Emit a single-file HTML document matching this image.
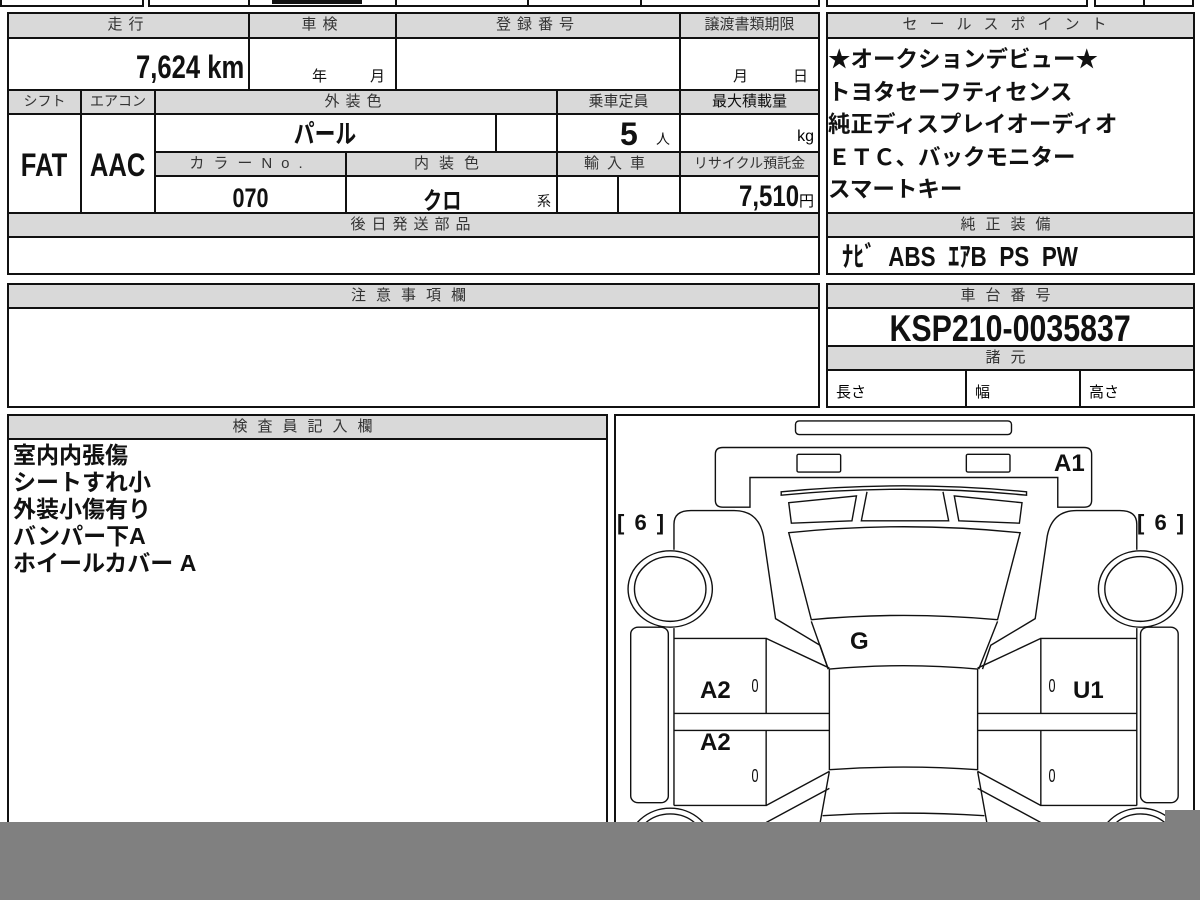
<!DOCTYPE html>
<html><head><meta charset="utf-8"><style>
body{margin:0;width:1200px;height:900px;overflow:hidden;background:#fff;position:relative;font-family:"Liberation Sans","Noto Sans CJK JP",sans-serif;}
.c{position:absolute;border:2px solid #111;box-sizing:border-box;background:#fff;}
.h{background:#d9d9d9;color:#333;font-size:15px;letter-spacing:6px;text-align:center;line-height:21px;}
.n{font-weight:bold;color:#111;}
.q{display:inline-block;transform:scaleX(0.8);}
.qr{transform-origin:right center;}
.ql{transform-origin:left center;}
.t{position:absolute;color:#111;}
</style></head><body>

<!-- top strip -->
<div class="c" style="left:0;top:-12px;width:144px;height:19px"></div>
<div class="c" style="left:148px;top:-12px;width:102px;height:19px"></div>
<div class="c" style="left:248px;top:-12px;width:149px;height:19px"></div>
<div style="position:absolute;left:272px;top:0;width:90px;height:4px;background:#111"></div>
<div class="c" style="left:395px;top:-12px;width:134px;height:19px"></div>
<div class="c" style="left:527px;top:-12px;width:115px;height:19px"></div>
<div class="c" style="left:640px;top:-12px;width:180px;height:19px"></div>
<div class="c" style="left:826px;top:-12px;width:262px;height:19px"></div>
<div class="c" style="left:1094px;top:-12px;width:51px;height:19px"></div>
<div class="c" style="left:1143px;top:-12px;width:51px;height:19px"></div>

<!-- main table -->
<div class="c h" style="left:7px;top:12px;width:243px;height:27px">走行</div>
<div class="c h" style="left:248px;top:12px;width:149px;height:27px">車検</div>
<div class="c h" style="left:395px;top:12px;width:286px;height:27px">登録番号</div>
<div class="c h" style="left:679px;top:12px;width:141px;height:27px;letter-spacing:0">譲渡書類期限</div>

<div class="c n" style="left:7px;top:37px;width:243px;height:54px;text-align:right;font-size:32px;line-height:56px;padding-right:4px"><span class="q qr">7,624 km</span></div>
<div class="c" style="left:248px;top:37px;width:149px;height:54px"><span class="t" style="left:62px;top:26px;font-size:15px">年</span><span class="t" style="left:120px;top:26px;font-size:15px">月</span></div>
<div class="c" style="left:395px;top:37px;width:286px;height:54px"></div>
<div class="c" style="left:679px;top:37px;width:141px;height:54px"><span class="t" style="left:52px;top:26px;font-size:15px">月</span><span class="t" style="left:112px;top:26px;font-size:15px">日</span></div>

<div class="c h" style="left:7px;top:89px;width:75px;height:26px;letter-spacing:0;font-size:14px">シフト</div>
<div class="c h" style="left:80px;top:89px;width:76px;height:26px;letter-spacing:0;font-size:14px">エアコン</div>
<div class="c h" style="left:154px;top:89px;width:404px;height:26px">外装色</div>
<div class="c h" style="left:556px;top:89px;width:125px;height:26px;letter-spacing:0">乗車定員</div>
<div class="c h" style="left:679px;top:89px;width:141px;height:26px;letter-spacing:0;color:#111">最大積載量</div>

<div class="c n" style="left:7px;top:113px;width:75px;height:101px;text-align:center;font-size:32px;line-height:100px"><span class="q">FAT</span></div>
<div class="c n" style="left:80px;top:113px;width:76px;height:101px;text-align:center;font-size:32px;line-height:100px"><span class="q">AAC</span></div>
<div class="c n" style="left:154px;top:113px;width:343px;height:40px;text-align:center;font-size:26px;line-height:38px"><span class="q">パール</span></div>
<div class="c" style="left:495px;top:113px;width:63px;height:40px"></div>
<div class="c" style="left:556px;top:113px;width:125px;height:40px"><span class="t n" style="left:62px;top:1px;font-size:32px">5</span><span class="t" style="left:98px;top:14px;font-size:14px">人</span></div>
<div class="c" style="left:679px;top:113px;width:141px;height:40px;text-align:right;font-size:16px;line-height:44px;padding-right:4px">kg</div>

<div class="c h" style="left:154px;top:151px;width:193px;height:26px;letter-spacing:9px">カラーNo.</div>
<div class="c h" style="left:345px;top:151px;width:213px;height:26px;letter-spacing:10px">内装色</div>
<div class="c h" style="left:556px;top:151px;width:125px;height:26px;letter-spacing:8px">輸入車</div>
<div class="c h" style="left:679px;top:151px;width:141px;height:26px;letter-spacing:0;font-size:14px">リサイクル預託金</div>

<div class="c n" style="left:154px;top:175px;width:193px;height:39px;text-align:center;font-size:27px;line-height:42px"><span class="q">070</span></div>
<div class="c" style="left:345px;top:175px;width:213px;height:39px"><span class="t n q ql" style="left:76px;top:4px;font-size:24px">クロ</span><span class="t" style="left:190px;top:14px;font-size:14px">系</span></div>
<div class="c" style="left:556px;top:175px;width:63px;height:39px"></div>
<div class="c" style="left:617px;top:175px;width:64px;height:39px"></div>
<div class="c" style="left:679px;top:175px;width:141px;height:39px;text-align:right;padding-right:4px;white-space:nowrap"><span class="n q qr" style="font-size:30px;line-height:40px">7,510</span><span style="font-size:15px">円</span></div>

<div class="c h" style="left:7px;top:212px;width:813px;height:26px">後日発送部品</div>
<div class="c" style="left:7px;top:236px;width:813px;height:39px"></div>

<!-- right -->
<div class="c h" style="left:826px;top:12px;width:369px;height:27px;letter-spacing:12px">セールスポイント</div>
<div class="c" style="left:826px;top:37px;width:369px;height:177px;padding:5px 0 0 0;font-size:22.5px;line-height:32.5px;font-weight:bold;color:#111;white-space:nowrap">★オークションデビュー★<br>トヨタセーフティセンス<br>純正ディスプレイオーディオ<br>ＥＴＣ、バックモニター<br>スマートキー</div>
<div class="c h" style="left:826px;top:212px;width:369px;height:26px;letter-spacing:10px">純正装備</div>
<div class="c n" style="left:826px;top:236px;width:369px;height:39px;font-size:28px;line-height:38px;padding-left:14px;white-space:nowrap"><span class="q ql" style="word-spacing:8px">ﾅﾋﾞ ABS ｴｱB PS PW</span></div>

<div class="c h" style="left:826px;top:283px;width:369px;height:26px;letter-spacing:10px">車台番号</div>
<div class="c n" style="left:826px;top:307px;width:369px;height:40px;text-align:center;font-size:37px;line-height:40px"><span class="q" style="transform:scaleX(0.82)">KSP210-0035837</span></div>
<div class="c h" style="left:826px;top:345px;width:369px;height:26px;letter-spacing:10px">諸元</div>
<div class="c" style="left:826px;top:369px;width:141px;height:39px;font-size:15px;line-height:44px;padding-left:8px">長さ</div>
<div class="c" style="left:965px;top:369px;width:116px;height:39px;font-size:15px;line-height:44px;padding-left:8px">幅</div>
<div class="c" style="left:1079px;top:369px;width:116px;height:39px;font-size:15px;line-height:44px;padding-left:8px">高さ</div>

<!-- caution -->
<div class="c h" style="left:7px;top:283px;width:813px;height:26px;letter-spacing:10px">注意事項欄</div>
<div class="c" style="left:7px;top:307px;width:813px;height:101px"></div>

<!-- inspector -->
<div class="c h" style="left:7px;top:414px;width:601px;height:26px;letter-spacing:10px">検査員記入欄</div>
<div class="c" style="left:7px;top:438px;width:601px;height:420px;padding:2px 0 0 4px;font-size:23px;line-height:27px;font-weight:bold;color:#111">室内内張傷<br>シートすれ小<br>外装小傷有り<br>バンパー下A<br>ホイールカバー A</div>

<!-- diagram -->
<div class="c" style="left:614px;top:414px;width:581px;height:444px"></div>
<svg style="position:absolute;left:610px;top:410px" width="590" height="420" viewBox="0 0 1568 1232" preserveAspectRatio="none">
<g fill="none" stroke="#111" stroke-width="1.4">
<rect vector-effect="non-scaling-stroke" x="493" y="32" width="574" height="40" rx="10"/>
<path vector-effect="non-scaling-stroke" d="M300 110 H1260 Q1280 110 1280 130 V265 Q1280 285 1260 285 H1190 V198 H372 V285 H300 Q280 285 280 265 V130 Q280 110 300 110 Z"/>
<rect vector-effect="non-scaling-stroke" x="497" y="130" width="116" height="52" rx="4"/>
<rect vector-effect="non-scaling-stroke" x="947" y="130" width="116" height="52" rx="4"/>
<path vector-effect="non-scaling-stroke" d="M455 240 Q780 205 1107 240 L1107 250 Q780 215 455 250 Z"/>
<path vector-effect="non-scaling-stroke" d="M475 272 L655 252 L643 325 L482 332 Z M1095 272 L915 252 L927 325 L1088 332 Z M683 240 L668 325 H900 L885 240"/>
<path vector-effect="non-scaling-stroke" d="M475 360 Q780 325 1090 360 L1030 615 Q780 590 535 615 Z M535 620 L580 760 M1030 620 L980 760"/>
<path vector-effect="non-scaling-stroke" d="M170 410 V335 Q170 295 215 295 H330 Q395 295 408 370 L440 612 L558 690 L580 760"/>
<path vector-effect="non-scaling-stroke" d="M1400 410 V335 Q1400 295 1355 295 H1240 Q1175 295 1162 370 L1130 612 L1012 690 L990 760"/>
<circle vector-effect="non-scaling-stroke" cx="160" cy="525" r="112"/><circle vector-effect="non-scaling-stroke" cx="160" cy="525" r="95"/>
<circle vector-effect="non-scaling-stroke" cx="1410" cy="525" r="112"/><circle vector-effect="non-scaling-stroke" cx="1410" cy="525" r="95"/>
<circle vector-effect="non-scaling-stroke" cx="160" cy="1280" r="112"/><circle vector-effect="non-scaling-stroke" cx="160" cy="1280" r="95"/>
<circle vector-effect="non-scaling-stroke" cx="1410" cy="1280" r="112"/><circle vector-effect="non-scaling-stroke" cx="1410" cy="1280" r="95"/>
<rect vector-effect="non-scaling-stroke" x="55" y="637" width="100" height="515" rx="20"/>
<rect vector-effect="non-scaling-stroke" x="1410" y="637" width="100" height="515" rx="20"/>
<path vector-effect="non-scaling-stroke" d="M170 640 V1160 M170 670 H415 V890 M415 670 L583 757 M170 890 H583 M170 940 H583 M415 940 V1160 H170 M415 1160 L583 1060 M415 1210 L583 1110"/>
<path vector-effect="non-scaling-stroke" d="M1400 640 V1160 M1400 670 H1145 V890 M1145 670 L977 757 M1400 890 H977 M1400 940 H977 M1145 940 V1160 H1400 M1145 1160 L977 1060 M1145 1210 L977 1110"/>
<path vector-effect="non-scaling-stroke" d="M583 760 Q780 740 977 760 V1055 Q780 1040 583 1055 Z M583 1060 L555 1232 M977 1060 L1005 1232 M565 1190 Q780 1175 995 1190"/>
</g>
</svg>
<div class="t" style="left:617px;top:510px;font-size:22px;font-weight:bold;word-spacing:4px">[ 6 ]</div>
<div class="t" style="left:1137px;top:510px;font-size:22px;font-weight:bold;word-spacing:4px">[ 6 ]</div>
<div class="t n" style="left:1054px;top:450px;font-size:24px">A1</div>
<div class="t n" style="left:850px;top:628px;font-size:24px">G</div>
<div class="t n" style="left:700px;top:677px;font-size:24px">A2</div>
<div class="t n" style="left:700px;top:729px;font-size:24px">A2</div>
<div class="t n" style="left:1073px;top:677px;font-size:24px">U1</div>
<div class="t" style="left:750px;top:676px;font-size:18px;transform:scaleX(0.7)">0</div>
<div class="t" style="left:750px;top:766px;font-size:18px;transform:scaleX(0.7)">0</div>
<div class="t" style="left:1047px;top:676px;font-size:18px;transform:scaleX(0.7)">0</div>
<div class="t" style="left:1047px;top:766px;font-size:18px;transform:scaleX(0.7)">0</div>

<div style="position:absolute;left:1165px;top:810px;width:35px;height:14px;background:#808080"></div>
<div style="position:absolute;left:0;top:822px;width:1200px;height:78px;background:#808080"></div>
</body></html>
